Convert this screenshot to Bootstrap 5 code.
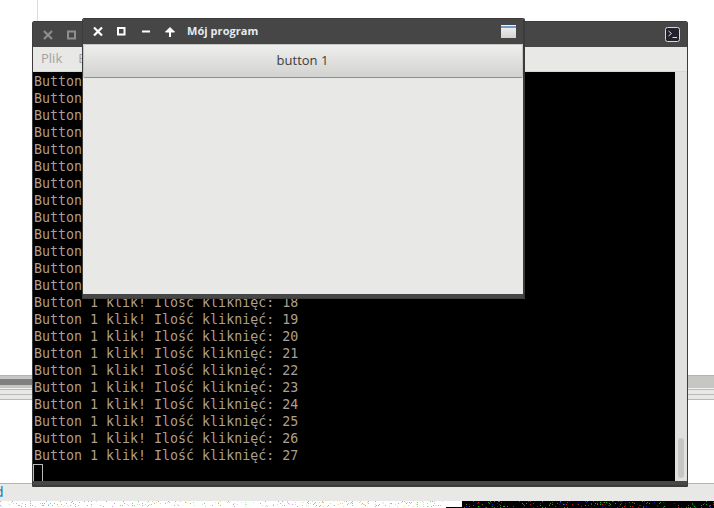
<!doctype html>
<html lang="pl"><head><meta charset="utf-8">
<title>Mój program</title>
<link href="https://cdn.jsdelivr.net/npm/bootstrap@5.3.0/dist/css/bootstrap.min.css" rel="stylesheet">
<style>
html,body{margin:0;background:#fff;overflow:hidden}
.desk{width:714px;height:508px;overflow:hidden;background:#fff}
.guide{left:37px;top:0;width:1px;height:21px;background:#cfe6c4}
.spacer-top{height:375px}
.split-a{height:4px;background:#c6c6c4;border-top:1px solid #b5b5b3}
.split-a2{height:9px;background:#c6c6c4}
.sa-dark{left:0;top:379px;width:40px;height:6px;background:#7f8180}
.s-w{height:1px;background:#f2f2f0}
.s-l{height:1px;background:#b9b9b7}
.s-g{height:4px;background:#e8e8e6}
.mid{height:83px;background:#fff}
.lower{height:18px;background:#e8e8e6;border-top:1px solid #b5b5b3;color:#2a6fb0;font:14px "Open Sans",sans-serif}
.lower span{margin-left:-5px;line-height:16px}
.noise{height:7px;display:block}
.win{background:#e8e8e6;border:1px solid #3c3c3c;border-radius:2px 2px 0 0}
.win-back{left:32px;top:21px;width:656px;height:466px}
.win-front{left:82px;top:18px;width:442px;height:281px;box-shadow:1px 0 0 #3a3a3a}
.tbar{background:#464646;height:25px;flex:none;padding-left:9px}
.tbtn{width:24px;height:16px;flex:none}
.ttl{font:700 11px "Open Sans",sans-serif;color:#e4ebf3;margin-left:-1px;letter-spacing:.05px;line-height:14px;margin-top:-2px}
.menubar{height:25px;flex:none;font:13px/23px "Open Sans",sans-serif;color:#a2a2a0;padding-left:8px;gap:16px;border-bottom:1px solid #d6d6d4}
.term-row{min-height:0}
.term{background:#000;color:#ad9f8e;font:13.3px/17px "DejaVu Sans Mono",monospace;padding:1px 0 0 1px;white-space:pre;overflow:hidden}
.cursor{width:10px;height:19px;border:1px solid #b9b9b9;margin:0 0 0 -1px}
.sbar{width:12px;background:#e0e0de;padding:0 3px 3px;flex:none}
.sthumb{width:6px;height:40px;background:#c6c6c4;border-radius:3px}
.bbar{height:5px;background:#474747;flex:none;border-bottom:1px solid #3c3c3c}
.pressbtn.btn{height:34px;border-radius:2px;border:1px solid #c5c5c3;border-bottom-color:#8f8f8d;background:linear-gradient(#eeeeec,#d2d2d0);color:#3c3c3c;font:13px "Open Sans",sans-serif;padding:0 1px 2px 0;flex:none;width:100%}
.fbody{flex:1 1 auto;background:#e8e8e6}
.fbot{height:4px;background:#474747;flex:none}
.wicon{margin:-1px 7px 0 auto;display:block}
.ticon{margin:-1px 7px 0 auto;display:block}
</style></head>
<body>
<div class="desk position-relative">
  <div class="guide position-absolute"></div>
  <div class="spacer-top"></div>
  <div class="split-a"></div>
  <div class="split-a2"></div>
  <div class="s-w"></div><div class="s-l"></div><div class="s-g"></div><div class="s-l"></div><div class="s-g"></div><div class="s-l"></div>
  <div class="mid"></div>
  <div class="lower"><span class="d-block">d</span></div>
  <svg class="noise" id="noise" width="714" height="7" xmlns="http://www.w3.org/2000/svg"><rect width="462" height="7" fill="#fff"/><rect x="462" width="252" height="7" fill="#000"/><rect x="446" y="6" width="16" height="1" fill="#000"/></svg>
  <div class="sa-dark position-absolute"></div>

  <div class="win win-back position-absolute d-flex flex-column overflow-hidden">
    <div class="tbar d-flex align-items-center">
      <svg class="tbtn" viewBox="0 0 24 16"><path d="M1 4l8 8M9 4l-8 8" transform="translate(1 0)" stroke="#8e8e8e" stroke-width="2.2" fill="none"/></svg>
      <svg class="tbtn" viewBox="0 0 24 16"><rect x="2" y="4.5" width="7" height="7" fill="none" stroke="#8e8e8e" stroke-width="2"/></svg>
      <svg class="ticon" width="15" height="15" viewBox="0 0 15 15"><rect x=".5" y=".5" width="14" height="14" rx="2" fill="#23222c" stroke="#d8d8d8"/><path d="M3.500 4l3 2.500-3 2.500" fill="none" stroke="#ddd"/><path d="M7.500 10.500h4.500" stroke="#ddd"/></svg>
    </div>
    <div class="menubar d-flex"><span>Plik</span><span>Edycja</span></div>
    <div class="d-flex flex-grow-1 term-row">
      <div class="term flex-grow-1"><div>Button 1 klik! Ilość kliknięć: 5
Button 1 klik! Ilość kliknięć: 6
Button 1 klik! Ilość kliknięć: 7
Button 1 klik! Ilość kliknięć: 8
Button 1 klik! Ilość kliknięć: 9
Button 1 klik! Ilość kliknięć: 10
Button 1 klik! Ilość kliknięć: 11
Button 1 klik! Ilość kliknięć: 12
Button 1 klik! Ilość kliknięć: 13
Button 1 klik! Ilość kliknięć: 14
Button 1 klik! Ilość kliknięć: 15
Button 1 klik! Ilość kliknięć: 16
Button 1 klik! Ilość kliknięć: 17
Button 1 klik! Ilość kliknięć: 18
Button 1 klik! Ilość kliknięć: 19
Button 1 klik! Ilość kliknięć: 20
Button 1 klik! Ilość kliknięć: 21
Button 1 klik! Ilość kliknięć: 22
Button 1 klik! Ilość kliknięć: 23
Button 1 klik! Ilość kliknięć: 24
Button 1 klik! Ilość kliknięć: 25
Button 1 klik! Ilość kliknięć: 26
Button 1 klik! Ilość kliknięć: 27</div><div class="cursor"></div></div>
      <div class="sbar d-flex flex-column justify-content-end"><div class="sthumb"></div></div>
    </div>
    <div class="bbar"></div>
  </div>

  <div class="win win-front position-absolute d-flex flex-column overflow-hidden">
    <div class="tbar d-flex align-items-center">
      <svg class="tbtn" viewBox="0 0 24 16"><path d="M2 3.500l8 8M10 3.500l-8 8" stroke="#fff" stroke-width="2.2" fill="none"/></svg>
      <svg class="tbtn" viewBox="0 0 24 16"><rect x="2" y="4" width="6.500" height="6.500" fill="none" stroke="#fff" stroke-width="2"/></svg>
      <svg class="tbtn" viewBox="0 0 24 16"><path d="M2 7.500h8" stroke="#fff" stroke-width="2"/></svg>
      <svg class="tbtn" viewBox="0 0 24 16"><path d="M6 13V5" stroke="#fff" stroke-width="2"/><path d="M1.500 8L6 3.500 10.500 8z" fill="#fff" stroke="#fff"/></svg>
      <span class="ttl">Mój program</span>
      <svg class="wicon" width="15" height="13" viewBox="0 0 15 13"><defs><linearGradient id="wg" x1="0" y1="0" x2="0" y2="1"><stop offset="0" stop-color="#f4f4f4"/><stop offset="1" stop-color="#d4d4d2"/></linearGradient></defs><rect width="15" height="13" fill="url(#wg)"/><rect y="1" width="15" height="2" fill="#6d9ccb"/></svg>
    </div>
    <button type="button" class="btn pressbtn">button 1</button>
    <div class="fbody"></div>
    <div class="fbot"></div>
  </div>
</div>
<script src="https://cdn.jsdelivr.net/npm/bootstrap@5.3.0/dist/js/bootstrap.bundle.min.js"></script>
<script>
(function(){var s=12345;function r(n){s=(s*1103515245+12345)&2147483647;return (s>>8)%n}
var svg=document.getElementById('noise'),ns=svg.namespaceURI;
var light=['#ff80e8','#ffd860','#90e8ff','#e890ff','#ff9090','#b0ffa0'],dark=['#10b010','#1010c0','#c01010','#0c800c','#707010','#2020a0'];
function dot(x,y,c){var e=document.createElementNS(ns,'rect');e.setAttribute('x',x);e.setAttribute('y',y);e.setAttribute('width',1);e.setAttribute('height',1);e.setAttribute('fill',c);svg.appendChild(e)}
for(var i=0;i<260;i++)dot(r(446),r(6),light[r(6)]);
for(var j=0;j<170;j++)dot(462+r(252),r(7),dark[r(6)]);
})();
</script>
</body></html>
